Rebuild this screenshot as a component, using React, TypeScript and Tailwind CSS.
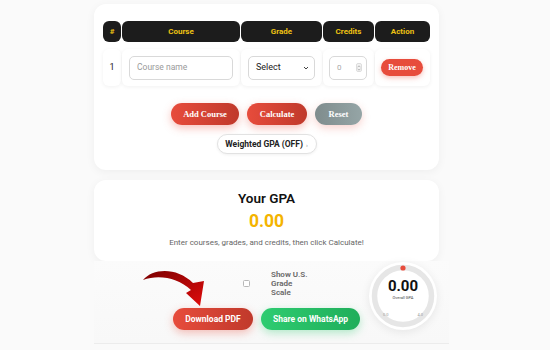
import React from 'react'

const sans = { fontFamily: 'Roboto, "Liberation Sans", Arial, sans-serif' }
const serif = { fontFamily: '"Liberation Serif", "Times New Roman", serif' }

function HeaderCell({ label, w }: { label: string; w: string }) {
  return (
    <div
      className={`${w} flex h-[21px] items-center justify-center rounded-[6px] bg-[#1c1c1c] text-[8px] font-bold text-[#eec213]`}
    >
      {label}
    </div>
  )
}

function Gauge() {
  return (
    <div className="absolute left-[275px] top-[1px] h-[68px] w-[68px] rounded-full bg-white shadow-[0_2px_10px_rgba(0,0,0,0.08)]">
      <svg width="68" height="68" viewBox="0 0 68 68" className="absolute left-0 top-0">
        <circle cx="34" cy="34" r="28.5" fill="none" stroke="#e6e6e6" strokeWidth="5.5" />
        <circle cx="34" cy="6" r="2.6" fill="#e74c3c" />
      </svg>
      <div className="relative flex h-full flex-col items-center pt-[16px]">
        <span className="text-[15px] font-bold leading-[16px] text-[#111]">0.00</span>
        <span className="mt-[1px] text-[4px] leading-[5px] text-[#444]">Overall GPA</span>
        <div className="mt-[12px] flex w-[40px] justify-between text-[4px] leading-[5px] text-[#999]">
          <span>0.0</span>
          <span>4.0</span>
        </div>
      </div>
    </div>
  )
}

function Arrow() {
  return (
    <svg
      width="70"
      height="48"
      viewBox="0 0 70 48"
      className="absolute left-[46px] top-[1px]"
    >
      <defs>
        <linearGradient id="arrowGrad" x1="0" y1="0" x2="1" y2="1">
          <stop offset="0" stopColor="#7a0000" />
          <stop offset="1" stopColor="#e10c0c" />
        </linearGradient>
      </defs>
      <path
        d="M3 18 C13 6, 37 5, 53 21 L64 19 L60 44 L46 31 L51 28 C38 16, 19 12, 3 18 Z"
        fill="url(#arrowGrad)"
      />
    </svg>
  )
}

export default function App() {
  return (
    <div className="min-h-[350px] w-[550px] overflow-hidden bg-[#fafafa]" style={sans}>
      <div className="ml-[94px] flex w-[355px] flex-col pt-[4px]">
        {/* courses card */}
        <div className="w-[345px] rounded-xl bg-white px-[9px] pb-[16px] pt-[17px] shadow-[0_2px_10px_rgba(0,0,0,0.05)]">
          <div className="flex gap-[1px]">
            <HeaderCell label="#" w="w-[18px]" />
            <HeaderCell label="Course" w="w-[118px]" />
            <HeaderCell label="Grade" w="w-[81px]" />
            <HeaderCell label="Credits" w="w-[51px]" />
            <HeaderCell label="Action" w="w-[55px]" />
          </div>

          <div className="mt-[7px] flex gap-[1px]">
            <div className="flex h-[37px] w-[18px] items-center justify-center rounded-md bg-white text-[9px] text-[#222] shadow-[0_1px_4px_rgba(0,0,0,0.06)]">
              1
            </div>
            <div className="flex h-[37px] w-[118px] items-center rounded-md bg-white px-[7px] shadow-[0_1px_4px_rgba(0,0,0,0.06)]">
              <div className="flex h-[24px] w-full items-center rounded-[5px] border border-[#d9d9d9] px-[7px] text-[8.5px] text-[#9a9a9a]">
                Course name
              </div>
            </div>
            <div className="flex h-[37px] w-[81px] items-center rounded-md bg-white px-[7px] shadow-[0_1px_4px_rgba(0,0,0,0.06)]">
              <div className="flex h-[24px] w-full items-center justify-between rounded-[5px] border border-[#d9d9d9] pl-[7px] pr-[5px] text-[9px] text-[#222]">
                <span>Select</span>
                <svg width="6" height="4" viewBox="0 0 6 4">
                  <path d="M1 1 L3 3 L5 1" fill="none" stroke="#444" strokeWidth="1" />
                </svg>
              </div>
            </div>
            <div className="flex h-[37px] w-[51px] items-center rounded-md bg-white pl-[6px] pr-[7px] shadow-[0_1px_4px_rgba(0,0,0,0.06)]">
              <div className="flex h-[24px] w-full items-center justify-between rounded-[5px] border border-[#d9d9d9] pl-[7px] pr-[4px] text-[8px] text-[#aaa]">
                <span>0</span>
                <div className="flex h-[9px] w-[6px] flex-col items-center justify-center rounded-[2px] border border-[#ddd] bg-[#f3f3f3]">
                  <svg width="4" height="6" viewBox="0 0 4 6">
                    <path d="M0.5 2.3 L2 0.8 L3.5 2.3 M0.5 3.7 L2 5.2 L3.5 3.7" fill="none" stroke="#999" strokeWidth="0.7" />
                  </svg>
                </div>
              </div>
            </div>
            <div className="flex h-[37px] w-[55px] items-center rounded-md bg-white pl-[6px] shadow-[0_1px_4px_rgba(0,0,0,0.06)]">
              <div
                className="flex h-[17px] w-[42px] items-center justify-center rounded-full bg-[#e74c3c] text-[8px] font-bold text-white shadow-[0_2px_5px_rgba(231,76,60,0.35)]"
                style={serif}
              >
                Remove
              </div>
            </div>
          </div>

          <div className="mt-[17px] flex justify-center gap-[8px]" style={serif}>
            <div className="flex h-[22px] w-[68px] items-center justify-center rounded-full bg-gradient-to-r from-[#e74c3c] to-[#c0392b] text-[8.5px] font-bold text-white shadow-[0_3px_8px_rgba(231,76,60,0.35)]">
              Add Course
            </div>
            <div className="flex h-[22px] w-[60px] items-center justify-center rounded-full bg-gradient-to-r from-[#e74c3c] to-[#c0392b] text-[8.5px] font-bold text-white shadow-[0_3px_8px_rgba(231,76,60,0.35)]">
              Calculate
            </div>
            <div className="flex h-[22px] w-[47px] items-center justify-center rounded-full bg-gradient-to-r from-[#7f8c8d] to-[#95a5a6] text-[8.5px] font-bold text-white shadow-[0_3px_8px_rgba(231,76,60,0.25)]">
              Reset
            </div>
          </div>

          <div className="mt-[9px] flex justify-center">
            <div className="flex h-[20px] w-[100px] items-center justify-center gap-[3px] rounded-full border border-[#e2e2e2] bg-white text-[8.5px] font-bold text-[#222] shadow-[0_1px_3px_rgba(0,0,0,0.06)]">
              Weighted GPA (OFF)
              <span className="text-[6px] font-normal text-[#888]">›</span>
            </div>
          </div>
        </div>

        {/* result card */}
        <div className="mt-[10px] flex w-[345px] flex-col items-center rounded-xl bg-white pb-[13px] pt-[10px] shadow-[0_2px_10px_rgba(0,0,0,0.05)]">
          <div className="text-[13.5px] font-semibold leading-[16px] text-[#111]">Your GPA</div>
          <div className="mt-[5px] text-[17.5px] font-bold leading-[20px] text-[#f4b400]">0.00</div>
          <div className="mt-[7px] text-[8px] leading-[10px] text-[#666]">
            Enter courses, grades, and credits, then click Calculate!
          </div>
        </div>

        {/* actions section */}
        <div className="relative w-[355px] border-b border-[#ececec] bg-gradient-to-b from-[#fbfbfb] to-[#f8f8f8] pb-[13px] pt-[9px]">
          <div className="ml-[149px] flex items-center gap-[21px]">
            <div className="h-[7px] w-[7px] rounded-[1.5px] border border-[#b8b8b8] bg-white" />
            <div className="w-[40px] text-[8px] font-semibold leading-[9px] text-[#666]">
              Show U.S. Grade Scale
            </div>
          </div>
          <div className="mt-[11px] flex w-[345px] justify-center gap-[8px]">
            <div className="flex h-[22px] w-[80px] items-center justify-center rounded-full bg-gradient-to-r from-[#e74c3c] to-[#c0392b] text-[8.5px] font-bold text-white shadow-[0_3px_8px_rgba(231,76,60,0.35)]">
              Download PDF
            </div>
            <div className="flex h-[22px] w-[99px] items-center justify-center rounded-full bg-gradient-to-r from-[#2ecc71] to-[#1fae5a] text-[8.5px] font-bold text-white shadow-[0_3px_8px_rgba(46,204,113,0.35)]">
              Share on WhatsApp
            </div>
          </div>
          <Arrow />
          <Gauge />
        </div>
      </div>
    </div>
  )
}
